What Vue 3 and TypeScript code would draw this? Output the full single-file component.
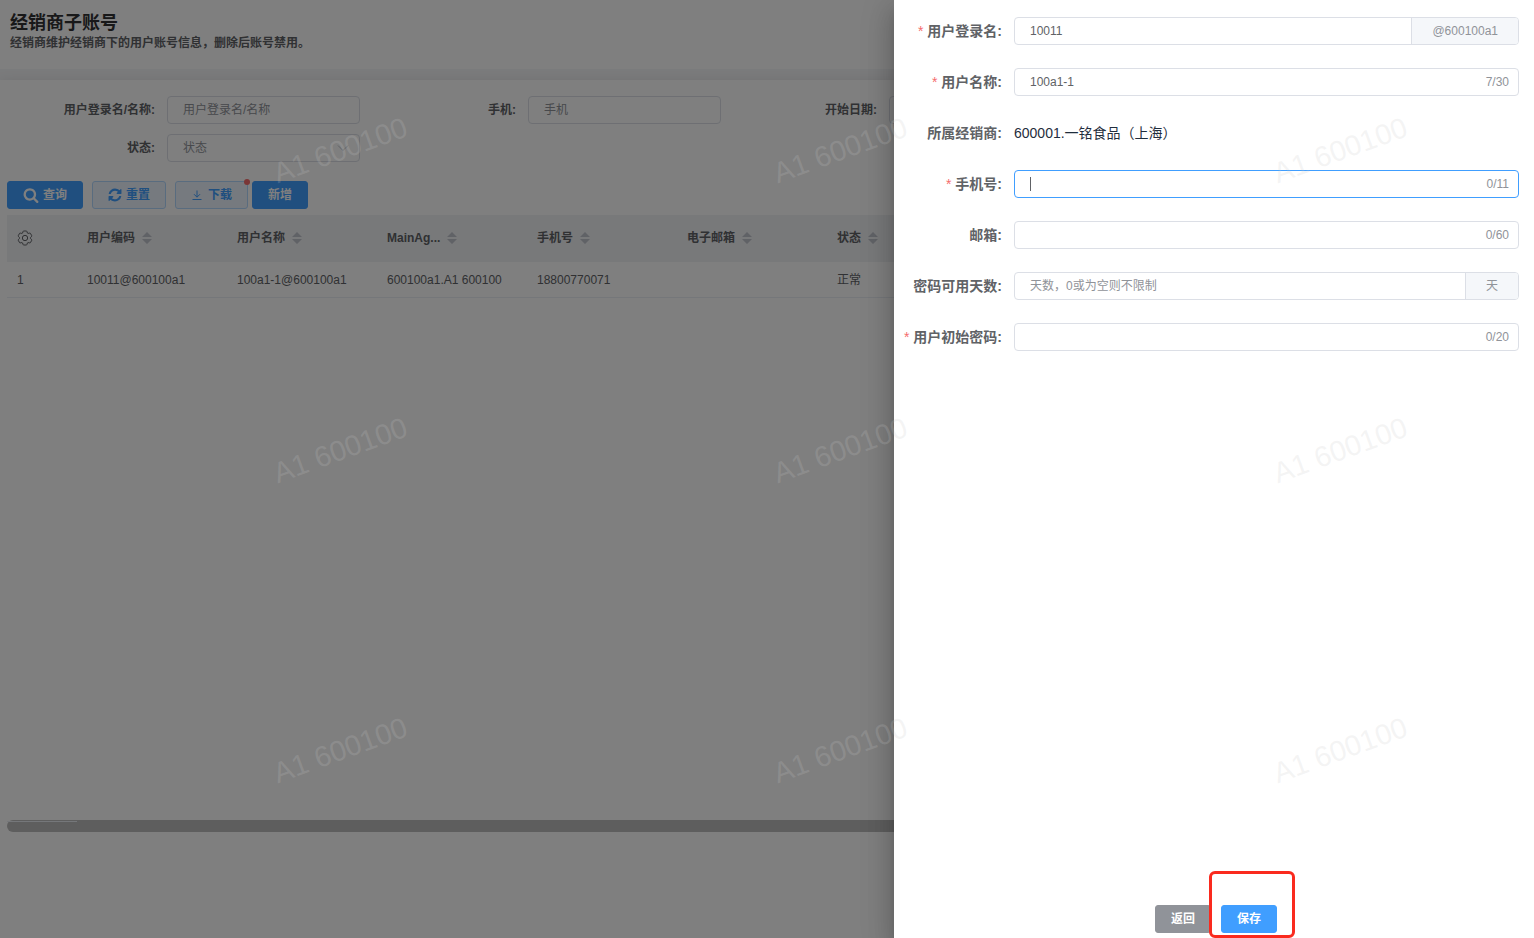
<script setup lang="ts">
import { reactive, ref } from 'vue'

interface Column {
  key: string
  title: string
}

interface Field {
  key: 'login' | 'name' | 'dealer' | 'phone' | 'email' | 'days' | 'password'
  label: string
  required?: boolean
  max?: number
  suffix?: string
  placeholder?: string
  type?: string
  plain?: boolean
}

const columns: Column[] = [
  { key: 'code', title: '用户编码' },
  { key: 'name', title: '用户名称' },
  { key: 'agent', title: 'MainAg...' },
  { key: 'phone', title: '手机号' },
  { key: 'email', title: '电子邮箱' },
  { key: 'state', title: '状态' },
]

const rows: Record<string, string>[] = [
  {
    code: '10011@600100a1',
    name: '100a1-1@600100a1',
    agent: '600100a1.A1 600100',
    phone: '18800770071',
    email: '',
    state: '正常',
  },
]

const fields: Field[] = [
  { key: 'login', label: '用户登录名', required: true, suffix: '@600100a1' },
  { key: 'name', label: '用户名称', required: true, max: 30 },
  { key: 'dealer', label: '所属经销商', plain: true },
  { key: 'phone', label: '手机号', required: true, max: 11 },
  { key: 'email', label: '邮箱', max: 60 },
  { key: 'days', label: '密码可用天数', suffix: '天', placeholder: '天数，0或为空则不限制' },
  { key: 'password', label: '用户初始密码', required: true, max: 20, type: 'password' },
]

const form = reactive({
  login: '10011',
  name: '100a1-1',
  dealer: '600001.一铭食品（上海）',
  phone: '',
  email: '',
  days: '',
  password: '',
})

const filters = reactive({ user: '', phone: '', start: '', state: '' })
const active = ref<string>('phone')
</script>

<template>
  <div class="app">
    <div class="page">
      <header class="page-head">
        <h1>经销商子账号</h1>
        <p>经销商维护经销商下的用户账号信息，删除后账号禁用。</p>
      </header>

      <main class="card">
        <form class="filters" @submit.prevent>
          <div class="filter">
            <label for="f-user">用户登录名/名称:</label>
            <input id="f-user" v-model="filters.user" class="control" type="text" placeholder="用户登录名/名称" />
          </div>
          <div class="filter">
            <label for="f-phone">手机:</label>
            <input id="f-phone" v-model="filters.phone" class="control" type="text" placeholder="手机" />
          </div>
          <div class="filter">
            <label for="f-start">开始日期:</label>
            <input id="f-start" v-model="filters.start" class="control" type="text" />
          </div>
          <div class="filter filter-first">
            <label for="f-state">状态:</label>
            <div class="select-box">
              <select id="f-state" v-model="filters.state" class="control">
                <option value="">状态</option>
                <option value="1">正常</option>
              </select>
              <svg viewBox="0 0 12 12" aria-hidden="true"><path d="M1 3.500l5 5 5-5" /></svg>
            </div>
          </div>
        </form>

        <div class="toolbar">
          <button type="button" class="btn primary">
            <svg class="icon-lg" viewBox="0 0 1792 1792" aria-hidden="true">
              <path d="M1216 832q0-185-131.500-316.500T768 384 451.500 515.500 320 832t131.500 316.500T768 1280t316.500-131.500T1216 832zm512 832q0 52-38 90t-90 38q-54 0-90-38l-343-342q-179 124-399 124-143 0-273.500-55.500t-225-150-150-225T64 832t55.500-273.500 150-225 225-150T768 128t273.500 55.500 225 150 150 225T1472 832q0 220-124 399l343 343q37 37 37 90z" />
            </svg>
            查询
          </button>
          <button type="button" class="btn light">
            <svg class="icon-md" viewBox="64 64 1664 1664" aria-hidden="true">
              <path d="M1639 1056q0 5-1 7-64 268-268 434.500T892 1664q-146 0-282.500-55T366 1452l-129 129q-19 19-45 19t-45-19-19-45v-448q0-26 19-45t45-19h448q26 0 45 19t19 45-19 45l-137 137q71 66 161 102t187 36q134 0 250-65t186-179q11-17 53-117 8-23 30-23h192q13 0 22.500 9.500t9.500 22.500zm25-800v448q0 26-19 45t-45 19h-448q-26 0-45-19t-19-45 19-45l138-138Q1097 384 896 384q-134 0-250 65T460 628q-11 17-53 117-8 23-30 23H178q-13 0-22.500-9.500T146 736v-7q65-268 270-434.500T896 128q146 0 284 55.500T1425 340l130-129q19-19 45-19t45 19 19 45z" />
            </svg>
            重置
          </button>
          <button type="button" class="btn light download">
            <svg class="icon-line" viewBox="0 0 12 12" aria-hidden="true">
              <path d="M6 1.500v6.500M3 5.200l3 3 3-3M1.500 10.500h9" />
            </svg>
            下载
            <span class="dot"></span>
          </button>
          <button type="button" class="btn primary add">新增</button>
        </div>

        <div class="table-wrap">
          <table>
            <colgroup>
              <col class="col-index" />
              <col v-for="c in columns.slice(0, -1)" :key="c.key" class="col-data" />
              <col />
            </colgroup>
            <thead>
              <tr>
                <th scope="col">
                  <svg class="gear" viewBox="0 0 1024 1024" aria-hidden="true">
                    <path d="M600.700 64a32 32 0 0 1 30.500 22.200l35.200 109.400c14.800 7.200 28.900 15.400 42.400 24.500l112.400-24.200a32 32 0 0 1 34.400 15.400L944.300 364.800a32 32 0 0 1-4 37.500l-77.100 85.100a357 357 0 0 1 0 49l77.100 85.300a32 32 0 0 1 4 37.500l-88.700 153.600a32 32 0 0 1-34.400 15.300L708.800 803.900c-13.400 9.100-27.600 17.300-42.400 24.500l-35.200 109.400A32 32 0 0 1 600.700 960H423.300a32 32 0 0 1-30.500-22.200L357.700 828.500a352 352 0 0 1-42.600-24.600l-112.300 24.200a32 32 0 0 1-34.400-15.400L79.700 659.200a32 32 0 0 1 4-37.500l77.100-85.200a357 357 0 0 1 0-49l-77.100-85.200a32 32 0 0 1-4-37.500l88.700-153.600a32 32 0 0 1 34.400-15.300l112.300 24.300c13.600-9.200 27.800-17.400 42.600-24.600l35.200-109.400A32 32 0 0 1 423.300 64z" />
                    <circle cx="512" cy="512" r="170" />
                  </svg>
                </th>
                <th v-for="c in columns" :key="c.key" scope="col">
                  <span class="th-cell">
                    {{ c.title }}
                    <svg class="sort" viewBox="0 0 10 12" aria-hidden="true">
                      <path d="M5 0l5 5H0zM5 12l5-5H0z" />
                    </svg>
                  </span>
                </th>
              </tr>
            </thead>
            <tbody>
              <tr v-for="(row, i) in rows" :key="row.code">
                <td>{{ i + 1 }}</td>
                <td v-for="c in columns" :key="c.key">{{ row[c.key] }}</td>
              </tr>
            </tbody>
          </table>
        </div>
        <div class="scrollbar"><span></span></div>
      </main>
    </div>

    <div class="mask"></div>

    <aside class="drawer" role="dialog" aria-label="经销商子账号">
      <form id="account" class="form" @submit.prevent>
        <div v-for="f in fields" :key="f.key" class="row">
          <label :for="'a-' + f.key" :class="{ required: f.required }">{{ f.label }}:</label>
          <output v-if="f.plain" :id="'a-' + f.key" class="value">{{ form[f.key] }}</output>
          <div v-else class="field" :class="{ focused: active === f.key }">
            <span v-if="active === f.key && !form[f.key]" class="caret"></span>
            <input
              :id="'a-' + f.key"
              v-model="form[f.key]"
              :type="f.type ?? 'text'"
              :maxlength="f.max"
              :placeholder="f.placeholder"
              autocomplete="off"
              @focus="active = f.key"
            />
            <span v-if="f.max" class="count">{{ form[f.key].length }}/{{ f.max }}</span>
            <span v-if="f.suffix" class="suffix">{{ f.suffix }}</span>
          </div>
        </div>
      </form>
      <footer class="actions">
        <button type="button" class="btn gray">返回</button>
        <div class="marked">
          <button type="submit" form="account" class="btn primary">保存</button>
          <span class="mark"></span>
        </div>
      </footer>
    </aside>

    <div class="watermark" aria-hidden="true">
      <div v-for="n in 9" :key="n" class="stamp"><span>A1 600100</span></div>
    </div>
  </div>
</template>

<style>
html,
body {
  height: 100%;
  margin: 0;
}
</style>

<style scoped>
.app {
  position: relative;
  height: 100vh;
  overflow: hidden;
  font-family: "Liberation Sans", "Noto Sans CJK SC", sans-serif;
  font-size: 12px;
  line-height: 16px;
  color: #606266;
}

.app *,
.app *::before {
  box-sizing: border-box;
}

button,
input,
select {
  font-family: inherit;
  font-size: 12px;
}

.page {
  display: flex;
  flex-direction: column;
  height: 100%;
  background: #f5f6f8;
}

.page-head {
  flex: none;
  height: 69px;
  padding: 11px 10px 0;
  margin-bottom: 11px;
  background: #fff;
}

h1 {
  margin: 0;
  font-size: 18px;
  line-height: 24px;
  color: #303133;
}

.page-head p {
  margin: 0;
  font-weight: 700;
}

.card {
  flex: 1;
  display: flex;
  flex-direction: column;
  background: #fff;
  box-shadow: 0 2px 12px 0 rgba(0, 0, 0, 0.1);
}

.filters {
  display: grid;
  grid-template-columns: repeat(4, minmax(0, 1fr));
  row-gap: 10px;
  padding: 16px 84px 0 6px;
}

.filter {
  display: flex;
  align-items: center;
  padding-right: 7px;
}

.filter-first {
  grid-column: 1;
}

.filter label {
  flex: none;
  width: 161px;
  padding-right: 12px;
  text-align: right;
  font-weight: 700;
}

.control {
  display: block;
  flex: 1;
  width: 100%;
  min-width: 0;
  height: 28px;
  padding: 0 15px;
  border: 1px solid #dcdfe6;
  border-radius: 4px;
  outline: 0;
  background: #fff;
  color: #606266;
}

select.control {
  appearance: none;
  color: #909399;
}

input::placeholder {
  color: #909399;
  opacity: 1;
}

.select-box {
  position: relative;
  flex: 1;
}

.select-box svg {
  position: absolute;
  right: 11px;
  top: 8px;
  width: 12px;
  height: 12px;
  fill: none;
  stroke: #c0c4cc;
}

.toolbar {
  display: flex;
  gap: 9px;
  padding: 19px 7px 6px;
}

.btn {
  display: inline-flex;
  align-items: center;
  gap: 4px;
  height: 28px;
  padding: 0 15px;
  border: 1px solid transparent;
  border-radius: 3px;
  font-weight: 700;
  line-height: 16px;
  cursor: pointer;
}

.btn svg {
  flex: none;
  fill: currentColor;
}

.icon-lg {
  width: 16px;
  height: 16px;
}

.icon-md {
  width: 14px;
  height: 14px;
}

.icon-line {
  width: 12px;
  height: 12px;
}

.btn .icon-line {
  margin-right: 1px;
  fill: none;
  stroke: currentColor;
}

.primary {
  background: #409eff;
  border-color: #409eff;
  color: #fff;
}

.light {
  background: #ecf5ff;
  border-color: #b3d8ff;
  color: #409eff;
}

.gray {
  background: #909399;
  border-color: #909399;
  color: #fff;
}

.download {
  position: relative;
}

.dot {
  position: absolute;
  top: -3px;
  right: -3px;
  width: 6px;
  height: 6px;
  border-radius: 50%;
  background: #f56c6c;
}

.toolbar .add {
  margin-left: -5px;
}

.table-wrap {
  flex: 1;
  min-height: 0;
  overflow: hidden;
  margin-left: 7px;
}

table {
  width: 100%;
  table-layout: fixed;
  border-spacing: 0;
}

.col-index {
  width: 70px;
}

.col-data {
  width: 150px;
}

th,
td {
  padding: 0 10px;
  text-align: left;
  white-space: nowrap;
}

th {
  height: 47px;
  padding-bottom: 2px;
  background: #f0f2f5;
}

td {
  height: 36px;
  border-bottom: 1px solid #ebeef5;
}

.th-cell {
  display: flex;
  align-items: center;
  gap: 7px;
}

.sort {
  width: 10px;
  height: 12px;
  fill: #c0c4cc;
}

.gear {
  display: block;
  width: 16px;
  height: 16px;
  fill: none;
  stroke: #606266;
  stroke-width: 64;
}

.scrollbar {
  flex: none;
  height: 12px;
  margin: 0 0 106px 7px;
  padding-top: 1px;
  border-radius: 6px;
  background: #bcbcbc;
}

.scrollbar span {
  display: block;
  width: 70px;
  height: 1px;
  background: #ebeef5;
}

.mask {
  position: absolute;
  inset: 0;
  background: rgba(0, 0, 0, 0.5);
}

.drawer {
  position: absolute;
  top: 0;
  right: 0;
  bottom: 0;
  display: flex;
  flex-direction: column;
  justify-content: space-between;
  width: 640px;
  max-width: 100%;
  background: #fff;
  box-shadow:
    0 8px 10px -5px rgba(0, 0, 0, 0.2),
    0 16px 24px 2px rgba(0, 0, 0, 0.14),
    0 6px 30px 5px rgba(0, 0, 0, 0.12);
}

.form {
  display: flex;
  flex-direction: column;
  gap: 23px;
  padding: 17px 15px 0 0;
}

.row {
  display: flex;
  align-items: center;
  height: 28px;
}

.row label {
  flex: none;
  width: 120px;
  padding-right: 12px;
  text-align: right;
  font-size: 14px;
  font-weight: 700;
}

.required::before {
  content: "*";
  margin-right: 4px;
  font-weight: 400;
  color: #f56c6c;
}

.value {
  font-size: 14px;
  color: #1f2d3d;
}

.field {
  position: relative;
  flex: 1;
  display: flex;
  align-items: stretch;
  height: 28px;
  border: 1px solid #dcdfe6;
  border-radius: 4px;
  overflow: hidden;
}

.field.focused {
  border-color: #409eff;
}

.field input {
  flex: 1;
  min-width: 0;
  padding: 0 15px;
  border: 0;
  outline: 0;
  background: transparent;
  color: #606266;
}

.count {
  align-self: center;
  padding-right: 9px;
  color: #909399;
}

.suffix {
  display: flex;
  align-items: center;
  padding: 0 20px;
  border-left: 1px solid #dcdfe6;
  background: #f5f7fa;
  color: #909399;
}

.caret {
  position: absolute;
  left: 15px;
  top: 6px;
  width: 1px;
  height: 14px;
  background: #606266;
}

.actions {
  display: flex;
  justify-content: center;
  gap: 10px;
  padding: 0 0 5px 4px;
}

.marked {
  position: relative;
}

.mark {
  position: absolute;
  top: -34px;
  right: -18px;
  bottom: -5px;
  left: -12px;
  border: 3px solid #fa2a1e;
  border-radius: 6px;
  pointer-events: none;
}

.watermark {
  position: absolute;
  inset: 0;
  display: grid;
  grid-template-columns: repeat(3, 500px);
  grid-auto-rows: 300px;
  padding-left: 90px;
  overflow: hidden;
  pointer-events: none;
}

.stamp {
  display: flex;
  align-items: center;
  justify-content: center;
}

.stamp span {
  font-size: 29px;
  line-height: 36px;
  white-space: nowrap;
  color: rgba(200, 200, 200, 0.2);
  transform: rotate(-20deg);
}
</style>
